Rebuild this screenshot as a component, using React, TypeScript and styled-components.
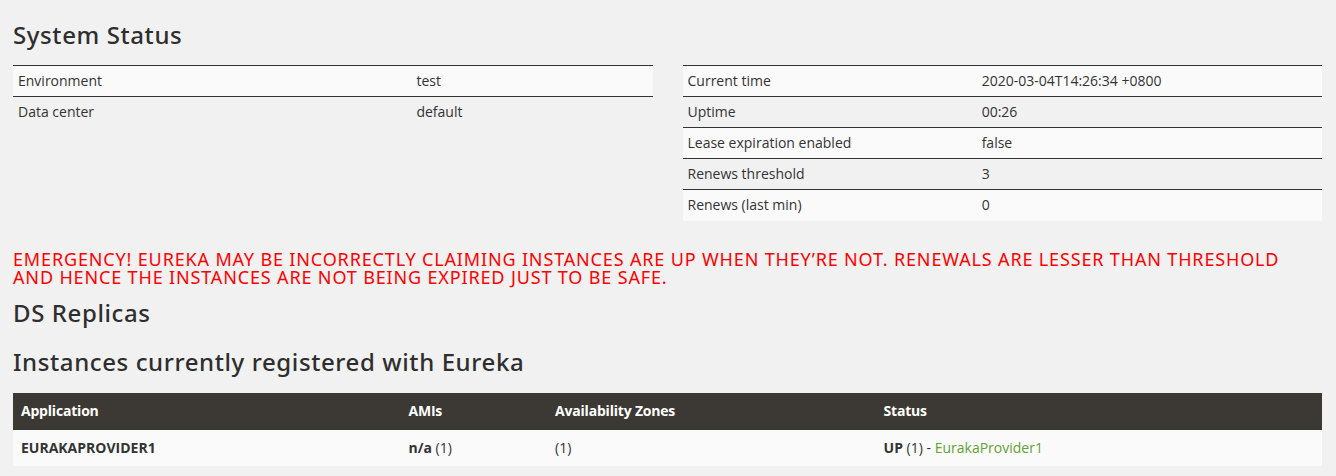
import React from "react";
import styled, { createGlobalStyle } from "styled-components";

const Global = createGlobalStyle`
  html, body { margin: 0; padding: 0; background: #f1f1f1; }
  body {
    font-family: "Open Sans", "Noto Sans", sans-serif;
    font-size: 14px;
    color: #333;
  }
`;

const Page = styled.div`
  padding: 20px 14px 10px 13px;
`;

const Heading = styled.h2<{ $top?: number; $bottom?: number }>`
  margin: ${(p) => p.$top ?? 0}px 0 ${(p) => p.$bottom ?? 0}px;
  font-family: "Noto Sans", "Open Sans", sans-serif;
  font-size: 24px;
  font-weight: 500;
  letter-spacing: 0.6px;
  line-height: 30px;
  color: #2e2e2e;
`;

const Columns = styled.div`
  display: grid;
  grid-template-columns: 1fr 1fr;
  column-gap: 30px;
  align-items: start;
`;

const InfoTable = styled.table`
  width: 100%;
  border-collapse: collapse;
  table-layout: fixed;
`;

const InfoRow = styled.tr`
  &:nth-child(odd) { background: #fafafa; }
`;

const InfoCell = styled.td<{ $w?: string }>`
  box-sizing: border-box;
  border-top: 1px solid #333;
  padding: 5px;
  line-height: 20px;
  height: 31px;
  width: ${(p) => p.$w ?? "auto"};
  color: #333;
`;

const Emergency = styled.h4`
  margin: 29px 0 0;
  font-family: "Noto Sans", "Open Sans", sans-serif;
  font-size: 18px;
  font-weight: 400;
  letter-spacing: 0.85px;
  line-height: 18px;
  color: #ff0000;
  text-transform: uppercase;
`;

const Instances = styled.table`
  width: 100%;
  border-collapse: collapse;
  table-layout: fixed;
  margin-top: 16px;
`;

const HeadCell = styled.th<{ $w: string }>`
  width: ${(p) => p.$w};
  background: #3c3833;
  color: #fff;
  text-align: left;
  font-weight: 700;
  font-size: 14px;
  height: 37px;
  padding: 0 8px 2px;
  box-sizing: border-box;
  letter-spacing: -0.2px;
`;

const BodyRow = styled.tr`
  background: #fafafa;
`;

const BodyCell = styled.td`
  height: 36px;
  padding: 0 8px;
  box-sizing: border-box;
  font-size: 14px;
  color: #333;
`;

const Strong = styled.b`
  font-weight: 700;
`;

const Link = styled.a`
  color: #5fa134;
  text-decoration: none;
`;

const leftRows: [string, string][] = [
  ["Environment", "test"],
  ["Data center", "default"],
];

const rightRows: [string, string][] = [
  ["Current time", "2020-03-04T14:26:34 +0800"],
  ["Uptime", "00:26"],
  ["Lease expiration enabled", "false"],
  ["Renews threshold", "3"],
  ["Renews (last min)", "0"],
];

export default function App() {
  return (
    <>
      <Global />
      <Page>
        <Heading $bottom={15}>System Status</Heading>
        <Columns>
          <InfoTable>
            <tbody>
              {leftRows.map(([k, v]) => (
                <InfoRow key={k}>
                  <InfoCell $w="62.3%">{k}</InfoCell>
                  <InfoCell>{v}</InfoCell>
                </InfoRow>
              ))}
            </tbody>
          </InfoTable>
          <InfoTable>
            <tbody>
              {rightRows.map(([k, v]) => (
                <InfoRow key={k}>
                  <InfoCell $w="46%">{k}</InfoCell>
                  <InfoCell>{v}</InfoCell>
                </InfoRow>
              ))}
            </tbody>
          </InfoTable>
        </Columns>
        <Emergency>
          Emergency! Eureka may be incorrectly claiming instances are up when they’re not. Renewals are lesser than threshold
          <br />
          and hence the instances are not being expired just to be safe.
        </Emergency>
        <Heading $top={12}>DS Replicas</Heading>
        <Heading $top={19}>Instances currently registered with Eureka</Heading>
        <Instances>
          <thead>
            <tr>
              <HeadCell $w="29.6%">Application</HeadCell>
              <HeadCell $w="11.2%">AMIs</HeadCell>
              <HeadCell $w="25.1%">Availability Zones</HeadCell>
              <HeadCell $w="34.1%">Status</HeadCell>
            </tr>
          </thead>
          <tbody>
            <BodyRow>
              <BodyCell>
                <Strong>EURAKAPROVIDER1</Strong>
              </BodyCell>
              <BodyCell>
                <Strong>n/a</Strong> (1)
              </BodyCell>
              <BodyCell>(1)</BodyCell>
              <BodyCell>
                <Strong>UP</Strong> (1) - <Link href="#">EurakaProvider1</Link>
              </BodyCell>
            </BodyRow>
          </tbody>
        </Instances>
      </Page>
    </>
  );
}
